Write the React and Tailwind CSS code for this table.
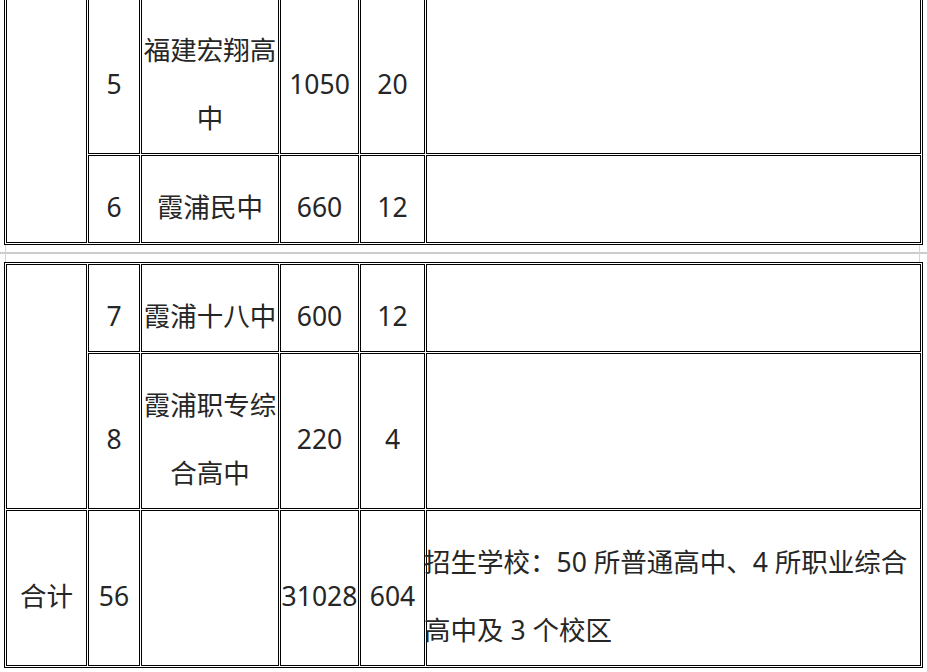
import React from "react";

const font = {
  fontFamily: '"Noto Sans", "Noto Sans CJK SC", sans-serif',
};

function Cell({ children, className = "", rowSpan, left }) {
  return (
    <td
      rowSpan={rowSpan}
      className={
        "border border-black pt-[17px] pb-[1px] align-middle leading-[68px] whitespace-nowrap " +
        (left ? "text-left pl-0 pr-[1px] " : "text-center px-0 ") +
        className
      }
    >
      {children}
    </td>
  );
}

function Cols() {
  return (
    <colgroup>
      <col className="w-[81px]" />
      <col className="w-[52px]" />
      <col className="w-[138px]" />
      <col className="w-[79px]" />
      <col className="w-[65px]" />
      <col className="w-[495px]" />
    </colgroup>
  );
}

export default function App() {
  return (
    <div
      className="w-[927px] h-[672px] overflow-hidden bg-white text-[26.5px] text-[#262626]"
      style={font}
    >
      <table className="ml-[4px] mt-[-4px] w-[919px] table-fixed border-separate border-spacing-[1px] border border-black">
        <Cols />
        <tbody>
          <tr className="h-[156px]">
            <Cell rowSpan={2}></Cell>
            <Cell>5</Cell>
            <Cell>
              福建宏翔高
              <br />中
            </Cell>
            <Cell>1050</Cell>
            <Cell>20</Cell>
            <Cell></Cell>
          </tr>
          <tr className="h-[86px]">
            <Cell>6</Cell>
            <Cell>霞浦民中</Cell>
            <Cell>660</Cell>
            <Cell>12</Cell>
            <Cell></Cell>
          </tr>
        </tbody>
      </table>

      <div className="relative h-[17px]">
        <div className="absolute left-0 right-0 top-[7px] h-[2px] bg-[#cccccc]" />
        <div className="absolute left-[5px] top-0 bottom-0 w-[1px] bg-[#d4d4d4]" />
        <div className="absolute left-[919px] top-0 bottom-0 w-[1px] bg-[#d4d4d4]" />
      </div>

      <table className="ml-[4px] w-[919px] table-fixed border-separate border-spacing-[1px] border border-black">
        <Cols />
        <tbody>
          <tr className="h-[88px]">
            <Cell rowSpan={2}></Cell>
            <Cell>7</Cell>
            <Cell>霞浦十八中</Cell>
            <Cell>600</Cell>
            <Cell>12</Cell>
            <Cell></Cell>
          </tr>
          <tr className="h-[156px]">
            <Cell>8</Cell>
            <Cell>
              霞浦职专综
              <br />
              合高中
            </Cell>
            <Cell>220</Cell>
            <Cell>4</Cell>
            <Cell></Cell>
          </tr>
          <tr className="h-[154px]">
            <Cell>合计</Cell>
            <Cell>56</Cell>
            <Cell></Cell>
            <Cell>31028</Cell>
            <Cell>604</Cell>
            <Cell left>
              <div className="-ml-[3px]">
                招生学校：50 所普通高中、4 所职业综合
                <br />
                高中及 3 个校区
              </div>
            </Cell>
          </tr>
        </tbody>
      </table>
    </div>
  );
}
